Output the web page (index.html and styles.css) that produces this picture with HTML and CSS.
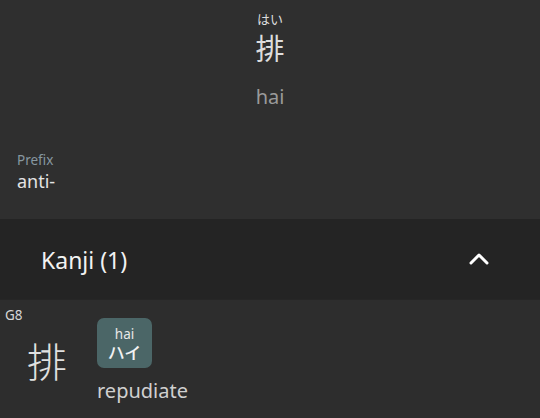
FILE: index.html
```html
<!DOCTYPE html>
<html lang="ja">
  <head>
    <meta charset="UTF-8" />
    <meta name="viewport" content="width=device-width, initial-scale=1.0" />
    <title>排 - hai</title>
    <link rel="stylesheet" href="styles.css">
  </head>
  <body>
    <div class="entry">
      <div class="word">
        <span class="reading">はい</span>
        <span class="writing">排</span>
        <span class="romaji">hai</span>
      </div>
      <div class="sense">
        <div class="pos">Prefix</div>
        <div class="gloss">anti-</div>
      </div>
    </div>

    <div class="section-head">
      <span class="section-title">Kanji (1)</span>
      <svg class="chevron" width="22" height="14" viewBox="0 0 22 14">
        <path d="M3 11 L11 3 L19 11" fill="none" stroke="#ffffff" stroke-width="3" stroke-linecap="round" stroke-linejoin="round" />
      </svg>
    </div>

    <div class="kanji-row">
      <div class="grade">G8</div>
      <div class="kanji-char">排</div>
      <div class="kanji-info">
        <div class="on-badge">
          <span class="badge-romaji">hai</span>
          <span class="badge-kana">ハイ</span>
        </div>
        <div class="meaning">repudiate</div>
      </div>
    </div>
  </body>
</html>
```

FILE: styles.css
```css
body {
  margin: 0;
  padding: 0;
  background-color: #2f2f2f;
  font-family: "Noto Sans", "Noto Sans CJK JP", sans-serif;
  color: #e0e0e0;
  height: 418px;
  overflow: hidden;
}
.entry {
  height: 219px;
  box-sizing: border-box;
  padding-top: 10px;
}
.word {
  display: flex;
  flex-direction: column;
  align-items: center;
}
.reading {
  font-size: 13px;
  line-height: 18px;
  color: #dddddd;
}
.writing {
  font-family: "Noto Sans CJK JP", sans-serif;
  font-size: 29px;
  line-height: 36px;
  margin-top: 1px;
  color: #dddddd;
}
.romaji {
  margin-top: 19px;
  font-size: 20px;
  line-height: 26px;
  color: #9a9a9a;
}
.sense {
  margin-top: 41px;
  padding-left: 17px;
}
.pos {
  font-size: 13.5px;
  line-height: 18px;
  color: #8797a0;
}
.gloss {
  font-size: 18px;
  line-height: 24px;
  color: #e4e4e4;
}
.section-head {
  height: 80px;
  background-color: #242424;
  display: flex;
  align-items: center;
  justify-content: space-between;
  padding: 0 50px 0 41px;
  border-bottom: 1px solid #262626;
}
.section-title {
  font-size: 23px;
  color: #f2f2f2;
  margin-top: 2px;
}
.kanji-row {
  display: flex;
  background-color: #2d2d2d;
  height: 120px;
}
.grade {
  width: 22px;
  padding-left: 5px;
  padding-top: 6px;
  font-size: 13.5px;
  line-height: 18px;
  color: #d6d6d6;
}
.kanji-char {
  width: 70px;
  padding-top: 36px;
  font-family: "Noto Sans CJK JP", sans-serif;
  font-weight: 200;
  font-size: 40px;
  line-height: 48px;
  color: #e0e0e0;
}
.kanji-info {
  padding-top: 18px;
}
.on-badge {
  width: 55px;
  height: 50px;
  border-radius: 7px;
  background-color: #4b6667;
  display: flex;
  flex-direction: column;
  align-items: center;
  justify-content: center;
}
.badge-romaji {
  font-size: 13.5px;
  line-height: 16px;
  color: #e8e8e8;
}
.badge-kana {
  font-family: "Noto Sans CJK JP", sans-serif;
  font-weight: 500;
  font-size: 17px;
  line-height: 19px;
  color: #f2f2f2;
}
.meaning {
  margin-top: 10px;
  font-size: 20px;
  line-height: 26px;
  color: #d0d0d0;
}
```
